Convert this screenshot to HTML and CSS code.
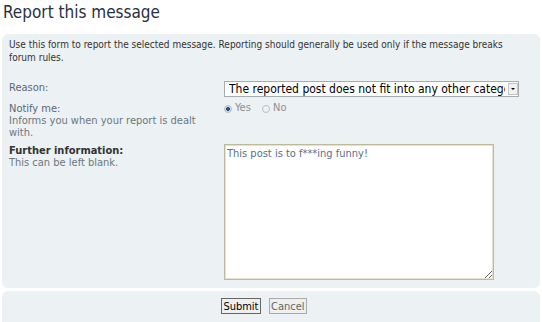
FILE: index.html
```html
<!DOCTYPE html>
<html lang="en">
<head>
    <title>Report this message</title>
    <link rel="stylesheet" href="styles.css">
</head>
<body>
    <h2 class="page_title">Report this message</h2>
    <form class="report_form" method="post" action="#">
        <div class="panel">
            <p class="intro">Use this form to report the selected message. Reporting should generally be used only if the message breaks forum rules.</p>

            <div class="row">
                <div class="row_label">
                    <label for="reason_id">Reason:</label>
                </div>
                <div class="row_field">
                    <span class="select_wrap">
                        <select id="reason_id" name="reason_id">
                            <option>The reported post does not fit into any other category</option>
                            <option>The post contains spam</option>
                            <option>The post is off topic</option>
                        </select>
                    </span>
                </div>
            </div>

            <div class="row">
                <div class="row_label">
                    <label>Notify me:</label>
                    <span class="explain">Informs you when your report is dealt with.</span>
                </div>
                <div class="row_field">
                    <label class="radio_label"><input type="radio" name="notify" value="1" checked> Yes</label>
                    <label class="radio_label"><input type="radio" name="notify" value="0"> No</label>
                </div>
            </div>

            <div class="row">
                <div class="row_label">
                    <label for="report_text" class="strong_label">Further information:</label>
                    <span class="explain">This can be left blank.</span>
                </div>
                <div class="row_field">
                    <textarea id="report_text" name="report_text">This post is to f***ing funny!</textarea>
                </div>
            </div>
        </div>

        <div class="panel submit_buttons">
            <input type="submit" class="button button_main" value="Submit">
            <input type="button" class="button" value="Cancel">
        </div>
    </form>
</body>
</html>
```
FILE: styles.css
```css
body {
    font-family: "DejaVu Sans Condensed", "DejaVu Sans", sans-serif;
    margin: 0 2px;
    padding: 0;
    background-color: #fff;
    color: #333;
}
.page_title {
    font-size: 17px;
    font-weight: normal;
    line-height: 20px;
    color: #28313f;
    margin: 2px 0 12px 1px;
}
.panel {
    background-color: #ecf1f3;
    border-radius: 6px;
    padding: 4px 16px 8px 7px;
}
.intro {
    font-size: 10px;
    line-height: 13px;
    margin: 0 0 17px;
}
.row {
    display: flex;
    margin-bottom: 5px;
}
.row:last-child {
    margin-bottom: 0;
}
.row_label {
    width: 215px;
    flex-shrink: 0;
    padding-top: 1px;
    font-size: 11px;
    line-height: 12px;
    color: #5b6779;
}
.row_label label {
    display: block;
}
.explain {
    display: block;
    width: 200px;
    color: #6b7782;
}
.strong_label {
    font-weight: bold;
    color: #333;
}
.row_field {
    font-size: 11px;
    line-height: 12px;
}
.select_wrap {
    position: relative;
    display: block;
    width: 295px;
}
.select_wrap select {
    -webkit-appearance: none;
    appearance: none;
    display: block;
    width: 295px;
    height: 16px;
    margin: 0;
    padding: 0 13px 0 4px;
    border: 1px solid #a5acb2;
    border-radius: 0;
    background-color: #fff;
    font-family: "DejaVu Sans Condensed", sans-serif;
    font-size: 12px;
    color: #000;
    box-sizing: border-box;
}
/* the little dropdown button */
.select_wrap::after {
    content: "";
    position: absolute;
    right: 1px;
    top: 2px;
    width: 8px;
    height: 10px;
    background-color: #f2f2f2;
    border: 1px solid #c3c3c3;
    pointer-events: none;
}
.select_wrap::before {
    content: "";
    position: absolute;
    right: 4px;
    top: 7px;
    border-left: 2px solid transparent;
    border-right: 2px solid transparent;
    border-top: 2px solid #000;
    z-index: 1;
    pointer-events: none;
}
.radio_label {
    display: inline-flex;
    align-items: center;
    color: #8f8f8f;
    margin-right: 8px;
}
.radio_label input {
    -webkit-appearance: none;
    appearance: none;
    width: 8px;
    height: 8px;
    margin: 1px 3px 0 0;
    border: 1px solid #b9c0c6;
    border-radius: 50%;
    background-color: #eef0f2;
    box-sizing: border-box;
}
.radio_label input:checked {
    background: radial-gradient(circle, #2d4f7c 0, #2d4f7c 1.6px, #cfd8e2 2.2px);
}
textarea {
    display: block;
    width: 270px;
    height: 136px;
    margin: 0;
    padding: 2px 2px;
    border: 1px solid #bdb99a;
    box-shadow: inset 0 0 0 1px #e4e2cf;
    background-color: #fff;
    font-family: "DejaVu Sans Condensed", sans-serif;
    font-size: 11px;
    line-height: 13px;
    color: #5a6e8c;
    box-sizing: border-box;
    resize: both;
}
.submit_buttons {
    margin-top: 3px;
    padding: 7px 14px 10px 0;
    text-align: center;
    border-radius: 6px;
}
.button {
    height: 16px;
    margin: 0 2px;
    padding: 0 1px;
    border: 1px solid #aaa;
    border-radius: 0;
    background-color: #efefef;
    font-family: "DejaVu Sans Condensed", sans-serif;
    font-size: 11px;
    color: #666;
    vertical-align: top;
}
.button_main {
    border-color: #666;
    color: #000;
}
```
